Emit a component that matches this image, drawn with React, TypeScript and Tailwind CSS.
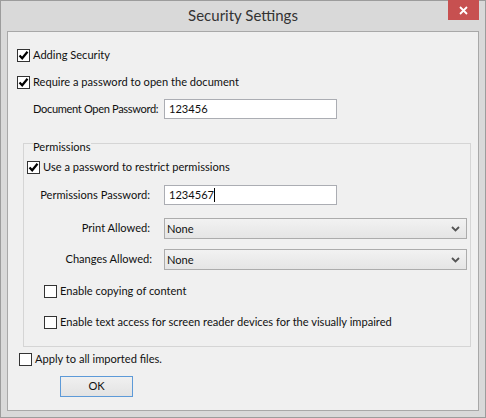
import React from "react";

function Check({ checked }: { checked: boolean }) {
  return (
    <span className="w-[13px] h-[13px] shrink-0 border border-[#333] bg-white flex items-center justify-center">
      {checked && (
        <svg width="11" height="11" viewBox="0 0 11 11">
          <path d="M1.5 5.5 L4.2 8.3 L9.5 1.8" fill="none" stroke="#000" strokeWidth="2.2" />
        </svg>
      )}
    </span>
  );
}

function CheckRow({ checked, label, className = "" }: { checked: boolean; label: string; className?: string }) {
  return (
    <div className={"h-[20px] flex items-center gap-[3px] whitespace-nowrap " + className}>
      <Check checked={checked} />
      <span>{label}</span>
    </div>
  );
}

function Select({ value }: { value: string }) {
  return (
    <div className="h-[21px] w-[303px] border border-[#acacac] bg-gradient-to-b from-[#f2f2f2] to-[#e5e5e5] flex items-center justify-between pl-[2px] pr-[6px]">
      <span className="pt-[2px]">{value}</span>
      <svg width="9" height="6" viewBox="0 0 9 6">
        <path d="M1 1 L4.5 4.5 L8 1" fill="none" stroke="#555" strokeWidth="1.8" />
      </svg>
    </div>
  );
}

export default function App() {
  return (
    <div
      className="w-[486px] h-[418px] bg-[#d9d9d9] border border-[#9c9c9c] flex flex-col text-[11.1px] text-[#111]"
      style={{ fontFamily: '"Segoe UI", Lato, sans-serif' }}
    >
      {/* Title bar */}
      <div className="relative h-[30px] flex items-center justify-center">
        <span className="text-[15px] text-[#333] pb-[1px]">Security Settings</span>
        <div className="absolute right-[6px] top-[-1px] w-[31px] h-[20px] bg-[#c75050] flex items-center justify-center">
          <svg width="9" height="9" viewBox="0 0 9 9">
            <path d="M1 1 L8 8 M8 1 L1 8" stroke="#fff" strokeWidth="1.8" />
          </svg>
        </div>
      </div>

      {/* Client area */}
      <div className="mx-[6px] h-[380px] bg-[#f0f0f0] border border-[#a8a8a8] flex flex-col pl-[9px]">
        <CheckRow checked label="Adding Security" className="mt-[13px]" />
        <CheckRow checked label="Require a password to open the document" className="mt-[7px]" />
        <div className="mt-[7px] h-[20px] flex items-center ml-[16px] whitespace-nowrap">
          <span className="w-[131px] shrink-0 tracking-[-0.35px]">Document Open Password:</span>
          <div className="w-[173px] h-[20px] border border-[#abadb3] bg-white flex items-center pl-[4px]">123456</div>
        </div>

        <fieldset className="mt-[12px] ml-[6px] w-[447px] border border-[#d5d5d5] pl-[3px] pr-[3px] pb-[14px] whitespace-nowrap">
          <legend className="ml-[6px] pt-[8px] leading-[16px]">Permissions</legend>
          <CheckRow checked label="Use a password to restrict permissions" className="mt-[2px]" />
          <div className="mt-[8px] h-[20px] flex items-center">
            <span className="w-[137px] text-right pr-[14px]">Permissions Password:</span>
            <div className="w-[173px] h-[20px] border border-[#abadb3] bg-white flex items-center pl-[4px]">
              1234567<span className="inline-block w-[1px] h-[14px] bg-black" />
            </div>
          </div>
          <div className="mt-[13px] flex items-center">
            <span className="w-[137px] text-right pr-[14px]">Print Allowed:</span>
            <Select value="None" />
          </div>
          <div className="mt-[10px] flex items-center">
            <span className="w-[137px] text-right pr-[12px]">Changes Allowed:</span>
            <Select value="None" />
          </div>
          <CheckRow checked={false} label="Enable copying of content" className="mt-[11px] pl-[17px]" />
          <CheckRow checked={false} label="Enable text access for screen reader devices for the visually impaired" className="mt-[11px] pl-[17px]" />
        </fieldset>

        <CheckRow checked={false} label="Apply to all imported files." className="mt-[2px] ml-[2px]" />
        <button className="mt-[7px] ml-[43px] w-[73px] h-[21px] border border-[#5d9ad8] bg-gradient-to-b from-[#f0f0f0] to-[#e3e3e3] flex items-center justify-center">
          OK
        </button>
      </div>
    </div>
  );
}
